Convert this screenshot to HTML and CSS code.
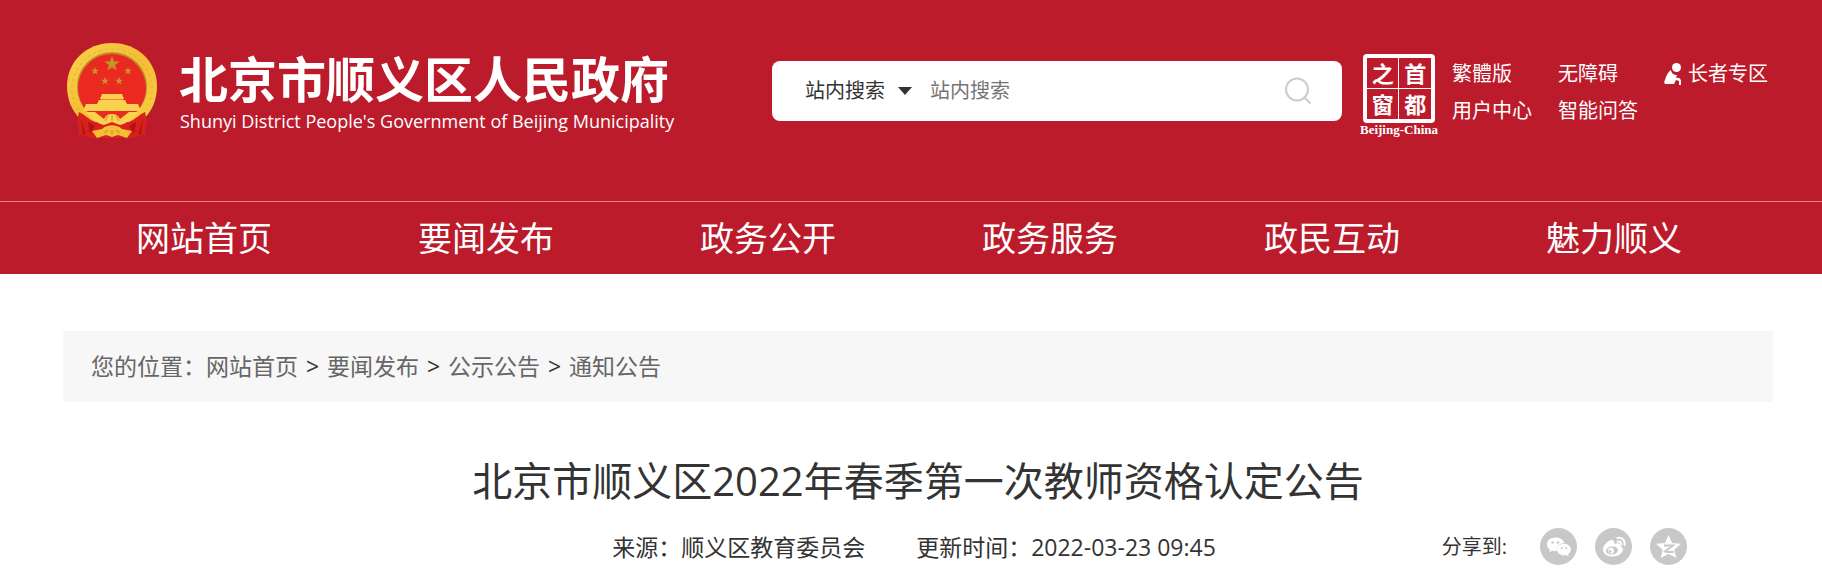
FILE: index.html
```html
<!DOCTYPE html>
<html lang="zh-CN">
<head>
<meta charset="utf-8">
<title>北京市顺义区2022年春季第一次教师资格认定公告</title>
<link rel="stylesheet" href="styles.css">
</head>
<body>
<header class="site-header">
  <div class="masthead">
    <a class="brand" href="#">
      <svg class="emblem" viewBox="0 0 92 98" aria-hidden="true">
        <defs>
          <linearGradient id="gold" x1="0" y1="0" x2="1" y2="1">
            <stop offset="0" stop-color="#f9d24a"/><stop offset=".5" stop-color="#f3bd34"/><stop offset="1" stop-color="#f8cf48"/>
          </linearGradient>
          <path id="star" d="M0-8 2-2.500 7.600-2.500 3.100 1 4.700 6.500 0 3.200-4.700 6.500-3.100 1-7.600-2.500-2-2.500Z"/>
        </defs>
        <path fill="url(#gold)" d="M46 1C20 1 1 20 1 44c0 14 5 25 14 34l12 10h38l12-10c9-9 14-20 14-34C91 20 72 1 46 1Z"/>
        <circle cx="46" cy="45" r="35" fill="#b98a2c"/>
        <circle cx="46" cy="46" r="34" fill="#ea2a20"/>
        <g fill="#c59330">
          <use href="#star" transform="translate(46 22)"/>
          <use href="#star" transform="translate(29 29) scale(.52)"/>
          <use href="#star" transform="translate(62 29) scale(.52)"/>
          <use href="#star" transform="translate(39 39) scale(.52)"/>
          <use href="#star" transform="translate(53 39) scale(.52)"/>
        </g>
        <path fill="#fbd150" d="M36 52h20l2 5H34ZM33 58h26l2 4H31ZM20 62h52l3 7H17Z"/>
        <path fill="#e88b25" d="M35 57h22v1H35Z"/>
        <path fill="#d9201b" d="M13 70c5 2 9 7 16 10l17-1 17 1c7-3 11-8 16-10l2 10-2 7 1 5-9 3-9 1H30l-9-1-9-3 1-5-2-7Z"/>
        <path fill="#ad1418" d="m15 77 5 16-3-1Zm62 0-5 16 3-1ZM22 80l7 4-5 8Zm48 0-7 4 5 8Z"/>
        <path fill="#fbd150" d="M20 70h9l9 7c2-4 5-5 8-5s6 1 8 5l9-7h9c-5 7-10 11-18 13l-8-3-8 3c-8-2-13-6-18-13Z"/>
        <path fill="#f4bd35" d="m26 89 10-2c5-5 15-5 20 0l10 2-5 7-9-3-6 2-6-2-9 3Z"/>
        <path fill="none" stroke="#c98b23" stroke-width="1" d="m39 79 3-5m4 5v-6m7 6-3-5M38 91l4-3m4 4v-4m8 3-4-3"/>
        <path fill="none" stroke="#e3a92e" stroke-width="1" stroke-dasharray="2 4" d="M12 68A40 40 0 1 1 80 68"/>
      </svg>
      <span class="brand-text">
        <span class="brand-zh">北京市顺义区人民政府</span>
        <span class="brand-en">Shunyi District People's Government of Beijing Municipality</span>
      </span>
    </a>
    <form class="search" role="search">
      <span class="scope">
        <select class="scope-select" aria-label="搜索范围"><option>站内搜索</option></select>
        <svg class="scope-arrow" viewBox="0 0 14 8" aria-hidden="true"><path d="M0 0h14L7 8Z"/></svg>
      </span>
      <input class="search-input" type="text" placeholder="站内搜索" aria-label="搜索内容">
      <button class="search-button" type="button" aria-label="搜索">
        <svg viewBox="0 0 27 28" aria-hidden="true"><circle cx="12" cy="12.500" r="11"/><path d="m19.500 20.500 6 6"/></svg>
      </button>
    </form>
    <a class="seal" href="#">
      <span class="seal-frame"><span>之</span><span>首</span><span>窗</span><span>都</span></span>
      <span class="seal-caption">Beijing-China</span>
    </a>
    <nav class="tools" aria-label="工具">
      <a href="#">繁體版</a>
      <a href="#">无障碍</a>
      <a class="elder" href="#"><svg viewBox="0 0 18 22" aria-hidden="true"><circle cx="12.500" cy="4.500" r="4.500"/><path d="M7 7c0 3 3 5 6 5l-1 3c3-1 5 1 5 3v4h-2v-4l-3-1-2 4H1c-1-1-1-3 0-4 1-4 3-8 6-10Z"/></svg>长者专区</a>
      <a href="#">用户中心</a>
      <a href="#">智能问答</a>
    </nav>
  </div>
  <nav class="main-nav" aria-label="主导航">
    <a href="#">网站首页</a>
    <a href="#">要闻发布</a>
    <a href="#">政务公开</a>
    <a href="#">政务服务</a>
    <a href="#">政民互动</a>
    <a href="#">魅力顺义</a>
  </nav>
</header>
<main class="page">
  <nav class="breadcrumb" aria-label="您的位置">
    <span class="crumb-label">您的位置：</span>
    <a href="#">网站首页</a><span class="sep">&gt;</span>
    <a href="#">要闻发布</a><span class="sep">&gt;</span>
    <a href="#">公示公告</a><span class="sep">&gt;</span>
    <a href="#">通知公告</a>
  </nav>
  <h1 class="title">北京市顺义区2022年春季第一次教师资格认定公告</h1>
  <div class="meta">
    <span class="source">来源：顺义区教育委员会</span>
    <span class="updated">更新时间：2022-03-23 09:45</span>
    <div class="share">
      <span class="share-label">分享到:</span>
      <a href="#" aria-label="微信">
        <svg viewBox="0 0 37 37" aria-hidden="true">
          <circle class="disc" cx="18.500" cy="18.500" r="18.500"/>
          <path d="M15.500 9.500c-5 0-8.500 3-8.500 7 0 2.300 1.200 4 3 5.200l-.8 2.600 3-1.500c1.500.4 3 .5 4.500.3-.5-5 3.500-8 7.500-8-.6-3.500-4.500-5.600-8.700-5.600Z"/>
          <path d="M24 15.800c-4 0-7 2.600-7 5.800s3 5.800 7 5.800c.8 0 1.600-.1 2.300-.3l2.500 1.300-.7-2.200c1.700-1.100 2.700-2.700 2.700-4.600 0-3.200-3-5.800-6.800-5.800Z"/>
          <g class="disc"><circle cx="12.500" cy="14.500" r="1.200"/><circle cx="18" cy="14.500" r="1.200"/><circle cx="21.700" cy="20" r="1"/><circle cx="26.300" cy="20" r="1"/></g>
        </svg>
      </a>
      <a href="#" aria-label="微博">
        <svg viewBox="0 0 37 37" aria-hidden="true">
          <circle class="disc" cx="18.500" cy="18.500" r="18.500"/>
          <path d="M17.500 12c-2-1.500-9.500 4.500-9.500 9.500 0 4.500 4.500 7 9.500 7 6 0 10.500-3.500 10.500-7 0-2-1.300-3.200-3-3.600.8-2.200-.8-3.600-5.500-1.900 .2-2-.4-3.300-2-4Z"/>
          <ellipse class="disc" cx="17" cy="22.500" rx="6" ry="4" transform="rotate(-8 17 22.500)"/>
          <circle cx="16" cy="22.700" r="3"/>
          <circle class="disc" cx="15" cy="23.500" r="1.400"/>
          <path class="wave" d="M22.500 10c4.500-1 8 2.500 7 7M22.500 13.500c2.500-.5 4 1 3.600 3.300"/>
        </svg>
      </a>
      <a href="#" aria-label="QQ空间">
        <svg viewBox="0 0 37 37" aria-hidden="true">
          <circle class="disc" cx="18.500" cy="18.500" r="18.500"/>
          <path d="m18.500 7 3.500 8 9 .8-6.700 6 2 8.200-7.800-4.300L10.700 30l2-8.200L6 15.800l9-.8Z"/>
          <path class="zed" d="M14 17.500h9l-8 6c3 .7 6 .7 9 .3"/>
        </svg>
      </a>
    </div>
  </div>
</main>
</body>
</html>
```
FILE: styles.css
```css
* { box-sizing: border-box; }

body {
  margin: 0;
  background: #fff;
  color: #333;
  font-family: "Open Sans", "Noto Sans CJK SC", sans-serif;
}

a { color: inherit; text-decoration: none; }
svg { display: block; }

.site-header { background: #bc1b2c; color: #fff; }

.masthead {
  display: flex;
  align-items: flex-start;
  min-height: 201px;
  padding: 42px 54px 0 66px;
}

.brand { display: flex; flex: none; }
.emblem { width: 92px; height: 98px; }
.brand-text { display: flex; flex-direction: column; padding: 7px 0 0 21px; }
.brand-zh { font-size: 49px; font-weight: 700; line-height: 60px; white-space: nowrap; }
.brand-en { padding-left: 1px; font-size: 18px; line-height: 24px; white-space: nowrap; }

.search {
  display: flex;
  align-items: center;
  flex: 0 1 570px;
  height: 60px;
  margin: 19px 0 0 auto;
  padding: 0 30px 0 33px;
  background: #fff;
  border-radius: 8px;
}
.scope { display: flex; align-items: center; gap: 12px; flex: none; }
.scope-select {
  appearance: none;
  width: 81px;
  padding: 0;
  border: 0;
  background: none;
  color: #333;
  font: inherit;
  font-size: 20px;
  line-height: 30px;
}
.scope-arrow { width: 14px; height: 8px; fill: #333; pointer-events: none; }
.search-input {
  flex: 1;
  min-width: 0;
  margin-left: 18px;
  padding: 0;
  border: 0;
  outline: 0;
  background: none;
  color: #333;
  font: inherit;
  font-size: 20px;
  line-height: 30px;
}
.search-input::placeholder { color: #757575; opacity: 1; }
.search-button { padding: 0; border: 0; background: none; }
.search-button svg { width: 27px; height: 28px; fill: none; stroke: #ccc; stroke-width: 2; }

.seal { flex: none; display: flex; flex-direction: column; align-items: center; margin: 12px 0 0 18px; }
.seal-frame {
  display: grid;
  grid-template-columns: 1fr 1fr;
  gap: 1px;
  width: 72px;
  height: 69px;
  border: 4px solid #fff;
  border-radius: 4px;
  background: linear-gradient(#fff, #fff) center / 1px 100% no-repeat, linear-gradient(#fff, #fff) center / 100% 1px no-repeat;
}
.seal-frame span { font-size: 22px; font-weight: 700; line-height: 30px; text-align: center; }
.seal-caption { font-family: "Liberation Serif", serif; font-size: 13px; font-weight: 700; line-height: 14px; }

.tools {
  flex: none;
  display: grid;
  grid-template-columns: 106px 106px auto;
  row-gap: 7px;
  margin: 17px 0 0 14px;
  font-size: 20px;
  line-height: 30px;
}
.elder { display: flex; align-items: center; gap: 6px; }
.elder svg { width: 18px; height: 22px; fill: #fff; }

.main-nav {
  display: grid;
  grid-template-columns: repeat(6, 1fr);
  padding: 0 67px 0 63px;
  border-top: 1px solid #e2838c;
  font-size: 34px;
  line-height: 72px;
  text-align: center;
}

.page { padding: 57px 49px 0 63px; }

.breadcrumb {
  display: flex;
  padding: 0 28px;
  background: #f7f7f7;
  color: #666;
  font-size: 23px;
  line-height: 71px;
}
.sep { width: 29px; color: #333; text-align: center; }

.title { margin: 49px 0 0; font-size: 40px; font-weight: 400; line-height: 60px; text-align: center; }

.meta {
  position: relative;
  display: flex;
  justify-content: center;
  gap: 51px;
  margin-top: 17px;
  padding-right: 8px;
  font-size: 23px;
  line-height: 38px;
}
.share {
  position: absolute;
  top: 0;
  right: 86px;
  display: flex;
  align-items: flex-start;
  gap: 18px;
}
.share-label { margin-right: 15px; font-size: 20px; }
.share svg { width: 37px; height: 37px; fill: #fff; }
.share .disc { fill: #c8c8c8; }
.share .wave { fill: none; stroke: #fff; stroke-width: 2; stroke-linecap: round; }
.share .zed { fill: none; stroke: #c8c8c8; stroke-width: 2; }
```
